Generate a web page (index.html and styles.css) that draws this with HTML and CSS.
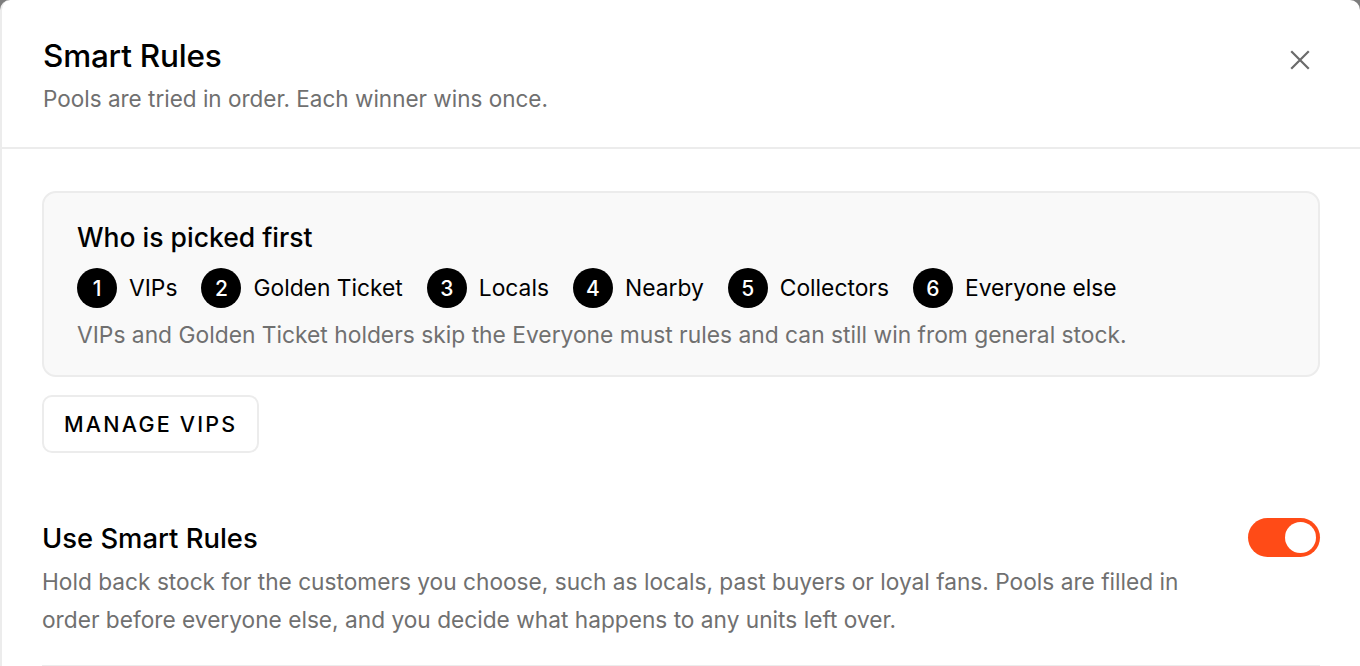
FILE: index.html
```html
<!DOCTYPE html>
<html lang="en">
<head>
<meta charset="utf-8">
<title>Smart Rules</title>
<link rel="stylesheet" href="styles.css">
</head>
<body>
<div class="modal">
  <header class="modal-header">
    <div class="header-text">
      <h1 class="title">Smart Rules</h1>
      <p class="subtitle">Pools are tried in order. Each winner wins once.</p>
    </div>
    <button class="close" aria-label="Close">
      <svg width="20" height="20" viewBox="0 0 20 20" fill="none" stroke="#6b6b6b" stroke-width="2.2" stroke-linecap="square">
        <path d="M2 2 L18 18 M18 2 L2 18"/>
      </svg>
    </button>
  </header>
  <div class="modal-body">
    <section class="order-card">
      <h2 class="card-title">Who is picked first</h2>
      <ol class="order-list">
        <li class="order-item"><span class="badge">1</span><span class="label">VIPs</span></li>
        <li class="order-item"><span class="badge">2</span><span class="label">Golden Ticket</span></li>
        <li class="order-item"><span class="badge">3</span><span class="label">Locals</span></li>
        <li class="order-item"><span class="badge">4</span><span class="label">Nearby</span></li>
        <li class="order-item"><span class="badge">5</span><span class="label">Collectors</span></li>
        <li class="order-item"><span class="badge">6</span><span class="label">Everyone else</span></li>
      </ol>
      <p class="card-note">VIPs and Golden Ticket holders skip the Everyone must rules and can still win from general stock.</p>
    </section>
    <button class="btn-outline">MANAGE VIPS</button>
    <section class="setting">
      <div class="setting-text">
        <h3 class="setting-title">Use Smart Rules</h3>
        <p class="setting-desc">Hold back stock for the customers you choose, such as locals, past buyers or loyal fans. Pools are filled in order before everyone else, and you decide what happens to any units left over.</p>
      </div>
      <span class="toggle" role="switch" aria-checked="true"><span class="knob"></span></span>
    </section>
    <div class="divider"></div>
  </div>
</div>
</body>
</html>
```

FILE: styles.css
```css
* { box-sizing: border-box; }
html, body { margin: 0; padding: 0; }
body {
  background: #7d7d7d;
  font-family: Inter, "Noto Sans", sans-serif;
  color: #000;
  height: 666px;
  overflow: hidden;
}
.modal {
  background: #fff;
  border-radius: 10px 10px 0 0;
  border-left: 2px solid #ececec;
  min-height: 700px;
}
.modal-header {
  display: flex;
  justify-content: space-between;
  align-items: flex-start;
  padding: 38px 41px 34px 41px;
  border-bottom: 2px solid #ececec;
}
.title {
  margin: 0;
  font-size: 31.5px;
  line-height: 36px;
  font-weight: 500;
  letter-spacing: -0.2px;
}
.subtitle {
  margin: 11px 0 0;
  font-size: 22.5px;
  line-height: 28px;
  color: #707070;
}
.close {
  background: none;
  border: 0;
  padding: 0;
  margin-top: 12px;
  margin-right: 9px;
  width: 20px;
  height: 20px;
  display: flex;
}
.modal-body {
  padding: 42px 40px 0 40px;
}
.order-card {
  background: #f9f9f9;
  border: 2px solid #ececec;
  border-radius: 14px;
  padding: 27px 33px 25px;
}
.card-title {
  margin: 0;
  font-size: 26.5px;
  line-height: 34px;
  font-weight: 500;
}
.order-list {
  list-style: none;
  margin: 14px 0 0;
  padding: 0;
  display: flex;
  gap: 24px;
}
.order-item {
  display: flex;
  align-items: center;
  gap: 12px;
}
.badge {
  width: 40px;
  height: 40px;
  border-radius: 50%;
  background: #000;
  color: #fff;
  display: flex;
  align-items: center;
  justify-content: center;
  font-size: 21px;
  font-weight: 500;
}
.label {
  font-size: 22.8px;
  line-height: 40px;
}
.card-note {
  margin: 12px 0 0;
  font-size: 22.8px;
  line-height: 30px;
  color: #707070;
}
.btn-outline {
  display: block;
  margin-top: 18px;
  height: 58px;
  padding: 0 20px;
  background: #fff;
  border: 2px solid #ececec;
  border-radius: 10px;
  font-family: inherit;
  font-size: 21.5px;
  font-weight: 500;
  letter-spacing: 2.2px;
  color: #000;
}
.setting {
  display: flex;
  justify-content: space-between;
  align-items: flex-start;
  gap: 48px;
  margin-top: 65px;
}
.setting-text { flex: 1; }
.setting-title {
  margin: 0;
  font-size: 27.4px;
  line-height: 40px;
  font-weight: 500;
}
.setting-desc {
  margin: 5px 0 0;
  font-size: 22.7px;
  line-height: 38px;
  color: #707070;
}
.toggle {
  flex: none;
  width: 72px;
  height: 39px;
  border-radius: 20px;
  background: #ff4b17;
  display: flex;
  align-items: center;
  justify-content: flex-end;
  padding: 0 4px;
}
.knob {
  width: 31px;
  height: 31px;
  border-radius: 50%;
  background: #fff;
}
.divider {
  margin-top: 26px;
  height: 2px;
  background: #ececec;
}
```
